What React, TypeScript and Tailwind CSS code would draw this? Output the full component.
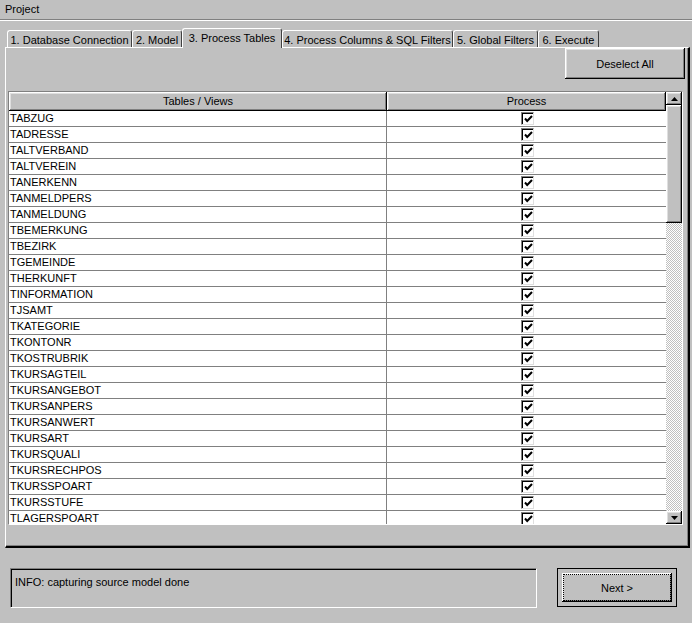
import React from "react";

const tables = [
  "TABZUG", "TADRESSE", "TALTVERBAND", "TALTVEREIN", "TANERKENN", "TANMELDPERS",
  "TANMELDUNG", "TBEMERKUNG", "TBEZIRK", "TGEMEINDE", "THERKUNFT", "TINFORMATION",
  "TJSAMT", "TKATEGORIE", "TKONTONR", "TKOSTRUBRIK", "TKURSAGTEIL", "TKURSANGEBOT",
  "TKURSANPERS", "TKURSANWERT", "TKURSART", "TKURSQUALI", "TKURSRECHPOS",
  "TKURSSPOART", "TKURSSTUFE", "TLAGERSPOART",
];

const tabs = [
  { label: "1. Database Connection", w: "w-[125px]" },
  { label: "2. Model", w: "w-[50px]" },
  { label: "3. Process Tables", w: "w-[100px]", active: true },
  { label: "4. Process Columns & SQL Filters", w: "w-[171px]" },
  { label: "5. Global Filters", w: "w-[85px]" },
  { label: "6. Execute", w: "w-[61px]" },
];

const raised =
  "shadow-[inset_-1px_-1px_#000,inset_1px_1px_#fff,inset_-2px_-2px_#808080,inset_2px_2px_#dfdfdf]";

const Check = () => (
  <div className="w-[13px] h-[13px] bg-white border-t border-l border-t-[#808080] border-l-[#808080] border-b border-r border-b-[#dfdfdf] border-r-[#dfdfdf] shadow-[inset_1px_1px_#000] flex items-center justify-center pl-[1px] pt-[1px]">
    <svg width="9" height="8" viewBox="0 0 9 8">
      <polyline points="1,3.5 3.2,6 8,1" fill="none" stroke="#000" strokeWidth="2" />
    </svg>
  </div>
);

const Arrow = ({ up }: { up?: boolean }) => (
  <div className={`h-[13px] bg-[#c0c0c0] flex items-center justify-center ${raised}`}>
    <svg width="7" height="4" viewBox="0 0 7 4">
      <polygon points={up ? "3.5,0 7,4 0,4" : "0,0 7,0 3.5,4"} fill="#000" />
    </svg>
  </div>
);

const App = () => {
  return (
    <div className="w-[692px] h-[623px] bg-[#c0c0c0] text-black text-[11px] font-['Liberation_Sans',Arial,sans-serif] overflow-hidden flex flex-col">
      <div className="h-[19px] pl-[5px] pt-[3px] leading-[13px]">Project</div>
      <div className="h-[2px] border-t border-t-[#808080] border-b border-b-white" />

      {/* tabs */}
      <div className="h-[26px] pl-[7px] flex items-end">
        {tabs.map((t) =>
          t.active ? (
            <div
              key={t.label}
              className={`${t.w} h-[20px] -mb-px relative z-10 bg-[#c0c0c0] rounded-t-[3px] border-t border-l border-white border-r border-r-[#404040] pt-[3px] text-center leading-[13px]`}
            >
              {t.label}
            </div>
          ) : (
            <div
              key={t.label}
              className={`${t.w} h-[17px] rounded-t-[3px] border-t border-l border-white border-r border-r-[#404040] pt-[3px] text-center leading-[13px]`}
            >
              {t.label}
            </div>
          )
        )}
      </div>

      {/* tab panel */}
      <div className="ml-[5px] w-[685px] h-[501px] border-t border-l border-white border-r-2 border-b-2 border-r-black border-b-black shadow-[inset_-1px_-1px_#808080] flex flex-col pl-[2px] pr-[3px]">
        <div className="flex justify-end">
          <button className={`w-[120px] h-[31px] pt-[2px] bg-[#c0c0c0] ${raised}`}>Deselect All</button>
        </div>

        <div className="mt-[12px] w-[675px] h-[434px] border border-t-[#808080] border-l-[#808080] border-b-white border-r-white flex">
          <div className="w-[657px] flex flex-col bg-white">
            <div className="h-[19px] flex bg-[#c0c0c0]">
              <div className={`w-[378px] flex items-center justify-center ${raised}`}>Tables / Views</div>
              <div className={`flex-1 flex items-center justify-center ${raised}`}>Process</div>
            </div>
            <div className="flex-1 overflow-hidden">
              {tables.map((name) => (
                <div key={name} className="h-[16px] flex border-b border-b-[#808080]">
                  <div className="w-[378px] border-r border-r-[#808080] pl-[1px] leading-[15px]">{name}</div>
                  <div className="flex-1 flex items-center justify-center pl-[2px]">
                    <Check />
                  </div>
                </div>
              ))}
            </div>
          </div>

          {/* scrollbar */}
          <div className="w-[16px] flex flex-col">
            <Arrow up />
            <div className={`h-[118px] bg-[#c0c0c0] ${raised}`} />
            <div className="flex-1 bg-[repeating-conic-gradient(#c0c0c0_0_25%,#ffffff_0_50%)] bg-[length:2px_2px]" />
            <Arrow />
          </div>
        </div>
      </div>

      {/* bottom */}
      <div className="mt-[20px] flex pl-[10px]">
        <div className="w-[527px] h-[40px] bg-[#c0c0c0] border-t border-l border-t-[#808080] border-l-[#808080] border-b border-r border-b-white border-r-white shadow-[inset_1px_1px_#000] pl-[4px] pt-[7px] leading-[13px]">
          INFO: capturing source model done
        </div>
        <button className="ml-[20px] w-[120px] h-[39px] border border-black bg-[#c0c0c0] p-[4px]">
          <div className={`w-full h-full ${raised} p-[1px]`}>
            <div className="w-full h-full border border-dotted border-black flex items-center justify-center pt-[2px]">Next &gt;</div>
          </div>
        </button>
      </div>
    </div>
  );
};

export default App;
